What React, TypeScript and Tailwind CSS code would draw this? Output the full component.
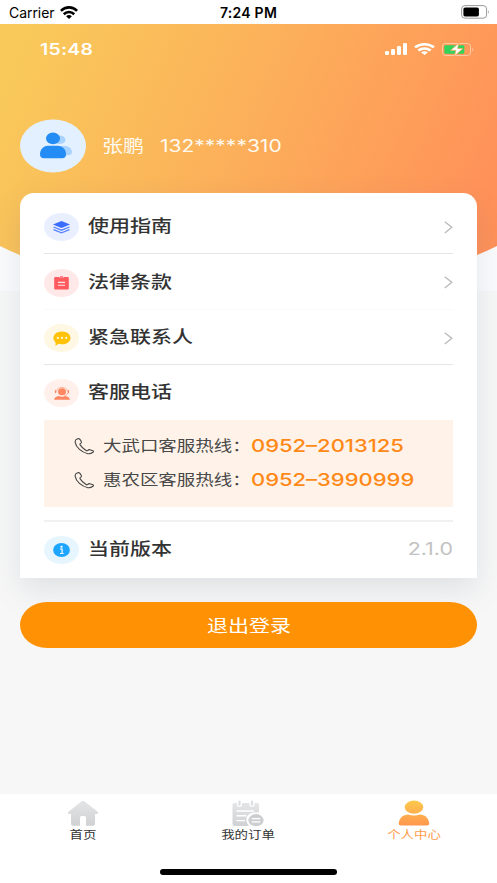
import type { ReactNode } from "react";

const FONT = "font-['Inter','Noto_Sans_CJK_SC',sans-serif]";

function Chevron() {
  return (
    <svg width="9" height="13" viewBox="0 0 9 13" fill="none" stroke="#b9b9b9" strokeWidth="1.3">
      <path d="M0.8 0.8L7.8 6.3L0.8 12" />
    </svg>
  );
}

function PhoneIcon() {
  return (
    <svg width="21" height="17" viewBox="0 0 21 17" fill="none" stroke="#444" strokeWidth="1.1" strokeLinejoin="round">
      <path d="M3 1.1C1.5 1.6 1 3 1.2 4.4C2 9.5 7.5 14.3 13.8 15.7C15.8 16.1 17.3 15.5 19 14.3C19.8 13.7 19.6 13.2 18.9 12.8L15.8 11.7C14.8 11.4 14.3 11.8 13.6 12.6C13 13 12.3 12.7 11.4 12C9 10.5 7.3 8.6 6 6.6C5.6 5.8 6.6 5.3 7.2 4.8C7.7 4.3 7.4 3.6 7 2.9L5.7 1.2C5 0.3 4 0.6 3 1.1Z" />
    </svg>
  );
}

function WifiIcon({ className }: { className?: string }) {
  return (
    <svg className={className} viewBox="0 0 20 14" preserveAspectRatio="none" fill="none" stroke="currentColor" strokeWidth="2.8">
      <path d="M1 5.2C6 0.2 14 0.2 19 5.2" />
      <path d="M4.2 8.9C7.4 5.6 12.6 5.6 15.8 8.9" />
      <path d="M10 14L6.8 11C8.6 9.3 11.4 9.3 13.2 11Z" fill="currentColor" stroke="none" />
    </svg>
  );
}

const layersIcon = (
  <svg width="17" height="13" viewBox="0 0 17 13">
    <path d="M8.5 0L17 3.6L8.5 7L0 3.6Z" fill="#3b6dff" />
    <path d="M0.5 6L8.5 9.2L16.5 6M0.5 8.7L8.5 11.9L16.5 8.7" fill="none" stroke="#5b84ff" strokeWidth="1.3" />
  </svg>
);

const clipboardIcon = (
  <svg width="15" height="14" viewBox="0 0 15 14">
    <path d="M1.2 1H5C5.3 2.3 9.7 2.3 10 1H13.8Q14.8 1 14.8 2V12.5Q14.8 13.5 13.8 13.5H1.2Q0.2 13.5 0.2 12.5V2Q0.2 1 1.2 1Z" fill="#ff5b5f" />
    <rect x="5.8" y="0.2" width="3.4" height="1.5" rx=".7" fill="#ff5b5f" />
    <path d="M4 6.4H11M4 9.2H11" stroke="#ffe5e6" strokeWidth="1.1" />
  </svg>
);

const chatIcon = (
  <svg width="18" height="15" viewBox="0 0 18 15">
    <path d="M9 0.4C13.8 0.4 17.5 3.2 17.5 6.9C17.5 10.6 13.8 13.3 9 13.3C7.7 13.3 6.5 13.1 5.4 12.8C4.6 13.7 3.4 14.4 2.2 14.8C2.7 13.8 2.8 12.6 2.5 11.2C1.2 10 0.4 8.6 0.4 6.9C0.4 3.2 4.2 0.4 9 0.4Z" fill="#ffc20a" />
    <g fill="#fff8dc">
      <circle cx="4.8" cy="6.9" r="1.1" />
      <circle cx="9" cy="6.9" r="1.1" />
      <circle cx="13.2" cy="6.9" r="1.1" />
    </g>
  </svg>
);

const agentIcon = (
  <svg width="16" height="13" viewBox="0 0 16 13">
    <path d="M2.4 4.3C3.4 -0.8 12.6 -0.8 13.6 4.3" fill="none" stroke="#ffa285" strokeWidth=".8" />
    <ellipse cx="8" cy="4.8" rx="4" ry="3.5" fill="#ff8763" />
    <path d="M1.6 3.8V5.6M14.4 3.8V5.6" stroke="#ff8763" strokeWidth="1.4" strokeLinecap="round" />
    <path d="M14 6C13.2 7.5 12 8.2 10.5 8.5" fill="none" stroke="#ff8763" strokeWidth=".7" />
    <path d="M0.2 12.8C0.2 10.4 2 9.2 4.8 8.9Q8 10.5 11.2 8.9C14 9.2 15.8 10.4 15.8 12.8Z" fill="#ff8763" />
  </svg>
);

const infoIcon = (
  <svg width="17" height="14" viewBox="0 0 17 14">
    <ellipse cx="8.5" cy="7" rx="8.4" ry="6.9" fill="#1ea5ff" />
    <ellipse cx="8.5" cy="3.7" rx="1.2" ry="1" fill="#fff" />
    <path d="M7 6H9.1V10.4M7 10.5H10.6" fill="none" stroke="#fff" strokeWidth="1.2" />
  </svg>
);

// Labels are drawn wider than tall, so each one is stretched horizontally.
function Label({ children, className }: { children: ReactNode; className: string }) {
  return <span className={`inline-block whitespace-nowrap ${className}`}>{children}</span>;
}

function Row({
  icon,
  tint,
  label,
  className,
  children,
}: {
  icon: ReactNode;
  tint: string;
  label: string;
  className: string;
  children?: ReactNode;
}) {
  return (
    <div className={`flex items-center ${className}`}>
      <div className={`flex h-[28px] w-[35px] shrink-0 items-center justify-center rounded-[50%] ${tint}`}>{icon}</div>
      <Label className="ml-[9px] origin-left -translate-y-[0.6px] scale-x-[1.235] text-[17px] leading-5 font-medium text-[#333]">{label}</Label>
      <div className="ml-auto flex items-center">{children}</div>
    </div>
  );
}

const hotlines = [
  { name: "大武口客服热线：", phone: "0952–2013125" },
  { name: "惠农区客服热线：", phone: "0952–3990999" },
];

function StatusBar() {
  return (
    <div className="grid h-6 grid-cols-3 items-center bg-white pr-[7px] pl-[9px] text-[14px] leading-5 text-black">
      <div className="flex items-center gap-[6px]">
        <span className="pt-[2px] tracking-[-0.05px]">Carrier</span>
        <WifiIcon className="-ml-px h-[13px] w-[18px]" />
      </div>
      <div className="-ml-[2px] pt-[2px] text-center font-semibold tracking-[0.25px]">7:24 PM</div>
      <div className="flex justify-end">
        <svg width="29" height="14" viewBox="0 0 29 14">
          <rect x=".6" y=".6" width="25" height="12.6" rx="3.4" fill="none" stroke="#999" />
          <rect x="2.4" y="2.4" width="15.5" height="9" rx="1.7" />
          <path d="M27.2 5Q29 7 27.2 9Z" fill="#999" />
        </svg>
      </div>
    </div>
  );
}

function InnerStatusBar() {
  return (
    <div className="flex h-[50px] items-center justify-between pr-[23px] pl-[40px] text-white">
      <Label className="origin-left translate-y-px scale-x-[1.25] text-[15.5px] font-semibold tracking-[0.2px]">15:48</Label>
      <div className="flex items-center">
        <svg width="22" height="12" viewBox="0 0 22 12" fill="#fff">
          <rect x="0" y="8" width="4" height="4" rx="1.2" />
          <rect x="6" y="6" width="4" height="6" rx="1.2" />
          <rect x="12" y="3" width="4" height="9" rx="1.2" />
          <rect x="18" y="0" width="4" height="12" rx="1.2" />
        </svg>
        <WifiIcon className="ml-[7px] h-[12px] w-[21px]" />
        <svg className="ml-[7px]" width="32" height="13" viewBox="0 0 32 13">
          <rect x=".5" y=".5" width="28" height="12" rx="3" fill="none" stroke="#fff" strokeOpacity=".45" />
          <rect x="2.3" y="2.2" width="20" height="8.6" rx="1" fill="#32d25b" />
          <path d="M30.2 4.5Q32 6.5 30.2 8.5Z" fill="#fff" fillOpacity=".5" />
          <path d="M17 0L8.5 7.4H14L12.3 13L21 5.5H15.5Z" fill="#fff" stroke="#f9a35a" strokeWidth=".7" />
        </svg>
      </div>
    </div>
  );
}

function TabBar() {
  return (
    <nav className="grid h-[89px] grid-cols-3 bg-white pt-[6px] text-[#333]">
      <div className="flex flex-col items-center">
        <svg width="32" height="27" viewBox="0 0 32 27">
          <defs>
            <linearGradient id="gray" x2="0" y2="1">
              <stop stopColor="#e4e5e6" />
              <stop offset="1" stopColor="#cfd1d3" />
            </linearGradient>
          </defs>
          <path d="M14.3 1.4Q16 0.3 17.7 1.4L30.5 11.7Q32 13.3 30 14H28V23.5Q28 25.8 25.3 25.8H19V17.5Q19 16 17.5 16H14.5Q13 16 13 17.5V25.8H6.7Q4 25.8 4 23.5V14H2Q0 13.3 1.5 11.7Z" fill="url(#gray)" />
        </svg>
        <Label className="scale-x-[1.22] text-[11px] leading-4">首页</Label>
      </div>
      <div className="flex flex-col items-center">
        <svg width="32" height="27" viewBox="0 0 32 27">
          <path d="M2.5 3H5V5.2Q5 7 7.5 7Q10 7 10 5.2V3H17.5V5.2Q17.5 7 20 7Q22.5 7 22.5 5.2V3H25Q27 3 27 5V12.6H23C17.5 12.6 14.4 16 14.4 20Q14.4 23 17 26H2.5Q0.5 26 0.5 24V5Q0.5 3 2.5 3Z" fill="url(#gray)" />
          <path d="M7.5 1.6V4.8M20 1.6V4.8" stroke="#dedfe1" strokeWidth="2.2" strokeLinecap="round" />
          <path d="M4.5 11H22M4.5 15.8H14.5M4.5 20.6H13" stroke="#fff" strokeWidth="1.4" />
          <ellipse cx="24" cy="20.2" rx="7.6" ry="6.1" fill="#ccced0" />
          <path d="M19.7 18.7H28.3M19.7 21.9H28.3" stroke="#fff" strokeWidth="1.3" />
        </svg>
        <Label className="scale-x-[1.22] text-[11px] leading-4">我的订单</Label>
      </div>
      <div className="flex flex-col items-center text-[#ff9d4d]">
        <svg width="32" height="27" viewBox="0 0 32 27">
          <defs>
            <linearGradient id="orange" x2="0" y2="27" gradientUnits="userSpaceOnUse">
              <stop stopColor="#fdca4c" />
              <stop offset="1" stopColor="#ff944f" />
            </linearGradient>
          </defs>
          <ellipse cx="16" cy="7.2" rx="9.2" ry="6.6" fill="url(#orange)" />
          <path d="M0.7 23.5C1.5 17.6 5.5 14.8 10 14.6Q16 16.3 22 14.6C26.5 14.8 30.5 17.6 31.3 23.5Q31.3 25.4 29 25.4H3Q0.7 25.4 0.7 23.5Z" fill="url(#orange)" />
        </svg>
        <Label className="scale-x-[1.22] text-[11px] leading-4">个人中心</Label>
      </div>
    </nav>
  );
}

export default function App() {
  return (
    <div className={`relative flex h-[883px] w-[497px] flex-col overflow-hidden bg-[#f7f7f7] ${FONT}`}>
      <StatusBar />
      <main className="relative isolate flex-1">
        {/* orange backdrop with the rounded lower edge */}
        <svg className="absolute inset-x-0 top-0 -z-10" width="497" height="267" viewBox="0 0 497 267">
          <defs>
            <linearGradient id="hero" x1="0" y1="70" x2="445" y2="267" gradientUnits="userSpaceOnUse">
              <stop stopColor="#f9c95a" />
              <stop offset=".48" stopColor="#fcb05a" />
              <stop offset="1" stopColor="#ff9159" />
            </linearGradient>
          </defs>
          <rect width="497" height="267" fill="#fbfbfd" />
          <path d="M0 0H497V222Q487 227 477 231Q248 300 20 231Q10 227 0 222Z" fill="url(#hero)" />
        </svg>

        <InnerStatusBar />

        <div className="mt-[45px] ml-5 flex h-[54px] items-center text-[#fffaf0]">
          <div className="flex h-[53px] w-[66px] -translate-y-[0.5px] items-center justify-center rounded-[50%] bg-[#e3f0ff] pl-[5px]">
            <svg width="34" height="28" viewBox="0 0 34 28">
              <ellipse cx="20.5" cy="8.2" rx="6" ry="4.3" fill="#a8d2ff" />
              <path d="M12 23.5C15 14 31 10.5 33 20Q33.3 23.5 29 23.7Z" fill="#a8d2ff" />
              <ellipse cx="14" cy="6.8" rx="7" ry="5.9" fill="#248cf5" />
              <path d="M1 22.5C1.3 17.3 5 14.3 9 14.3H19C23 14.3 26.7 17.3 27 22.5Q27 26.8 23 26.8H5Q1 26.8 1 22.5Z" fill="#248cf5" />
            </svg>
          </div>
          <Label className="ml-4 w-[58px] origin-left translate-y-px scale-x-[1.235] text-[17px]">张鹏</Label>
          <Label className="origin-left translate-y-px scale-x-[1.235] text-[17px]">132*****310</Label>
        </div>

        <section className="mx-5 mt-5 h-[385px] rounded-t-[14px] bg-white px-6 shadow-[0_12px_30px_rgba(90,105,125,0.15)]">
          <Row className="h-[61px] border-b border-[#e5e5e5] pt-2" tint="bg-[#e9efff]" icon={layersIcon} label="使用指南">
            <Chevron />
          </Row>
          <Row className="h-[56px] border-b border-[#fafafa] pt-[2px]" tint="bg-[#ffe8e8]" icon={clipboardIcon} label="法律条款">
            <Chevron />
          </Row>
          <Row className="h-[55px] border-b border-[#e5e5e5] pt-[2px]" tint="bg-[#fdf7e3]" icon={chatIcon} label="紧急联系人">
            <Chevron />
          </Row>
          <Row className="h-[55px] pt-px" tint="bg-[#fff0eb]" icon={agentIcon} label="客服电话" />
          <div className="flex h-[87px] flex-col bg-[#fff3e9] pt-[9px] pl-[30px]">
            {hotlines.map((line) => (
              <div key={line.phone} className="flex h-[34px] items-center">
                <PhoneIcon />
                <Label className="ml-[8px] w-[148px] origin-left translate-y-[0.4px] scale-x-[1.23] text-[15px] text-[#484848]">{line.name}</Label>
                <Label className="origin-left scale-x-[1.255] text-[17.5px] font-medium text-[#ff8817]">{line.phone}</Label>
              </div>
            ))}
          </div>
          <Row className="mt-[13px] h-[58px] border-t-2 border-[#f1f1f1]" tint="bg-[#e7f5ff]" icon={infoIcon} label="当前版本">
            <Label className="origin-right scale-x-[1.26] text-[17px] text-[#c2c2c2]">2.1.0</Label>
          </Row>
        </section>

        <button className="mx-5 mt-6 flex h-[46px] w-[457px] items-center justify-center rounded-[27px/23px] bg-[#ff9204] text-white">
          <Label className="translate-y-[1.5px] scale-x-[1.235] text-[17px]">退出登录</Label>
        </button>
      </main>
      <TabBar />
      <div className="absolute bottom-[8px] left-[160px] h-[6px] w-[177px] rounded-full bg-black" />
    </div>
  );
}
